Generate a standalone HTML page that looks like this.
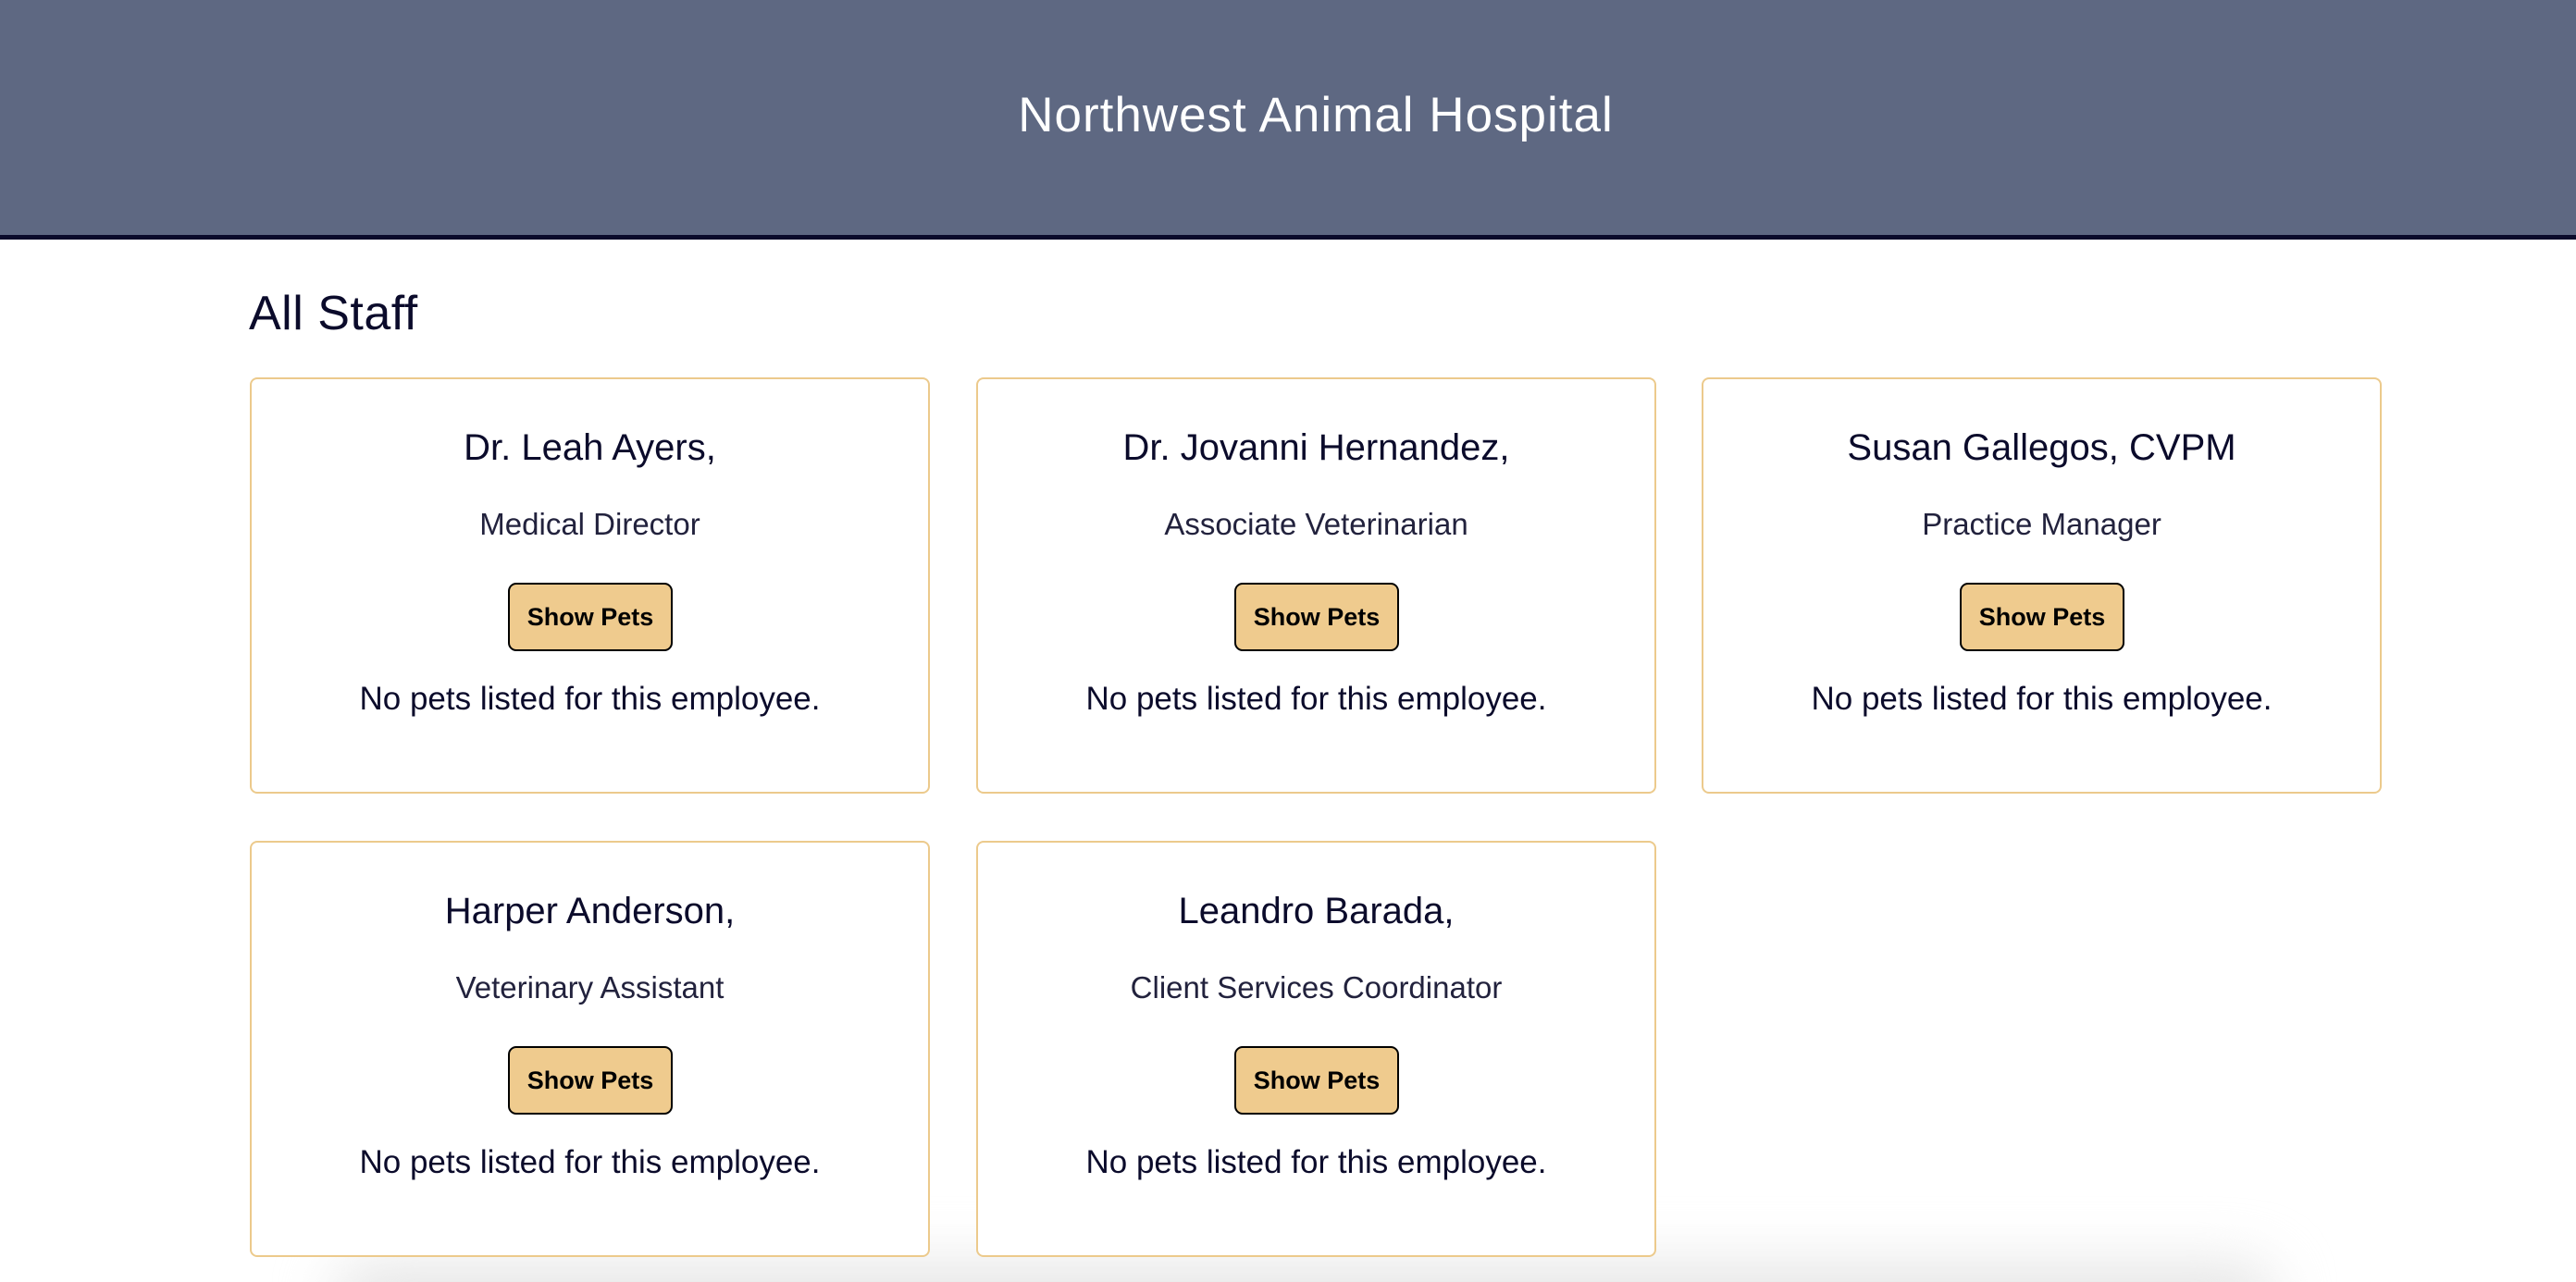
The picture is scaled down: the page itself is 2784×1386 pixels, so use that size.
<!DOCTYPE html>
<html><head><style>
html,body{margin:0;padding:0;width:2784px;height:1386px;overflow:hidden;background:#fff;font-family:"Liberation Sans",sans-serif;color:#0b0b2b;position:relative}
.hdr{position:absolute;left:0;top:0;width:2784px;height:254px;background:#5e6882;border-bottom:5px solid #0b0b2b}
.hdr h1{margin:0;position:absolute;left:60px;right:0;top:93px;text-align:center;font-weight:normal;font-size:53px;line-height:64px;color:#fff;letter-spacing:1px}
.title{position:absolute;left:269px;top:307px;font-size:52px;line-height:64px;margin:0;font-weight:normal;letter-spacing:0.5px}
.card{position:absolute;width:731px;height:446px;border:2px solid #ecca8c;border-radius:8px;background:#fff;text-align:center;z-index:2}
.card .n{position:absolute;left:0;right:0;top:50px;font-size:40px;line-height:48px}
.card .r{position:absolute;left:0;right:0;top:137px;font-size:33px;line-height:40px;font-weight:300;color:#22223d}
.card .b{position:absolute;left:277px;top:220px;width:178px;height:74px;box-sizing:border-box;background:#efcb8e;border:2px solid #000;border-radius:9px;font-weight:bold;font-size:27px;line-height:70px;color:#000}
.card .p{position:absolute;left:0;right:0;top:325px;font-size:35px;line-height:42px}
.sh{position:absolute;left:360px;top:1365px;width:2100px;height:80px;background:#e6e6e6;filter:blur(30px);border-radius:40px;z-index:1}
</style></head><body>
<div class="hdr"><h1>Northwest Animal Hospital</h1></div>
<h2 class="title">All Staff</h2>
<div class="card" style="left:270px;top:408px"><div class="n">Dr. Leah Ayers,</div><div class="r">Medical Director</div><div class="b">Show Pets</div><div class="p">No pets listed for this employee.</div></div>
<div class="card" style="left:1055px;top:408px"><div class="n">Dr. Jovanni Hernandez,</div><div class="r">Associate Veterinarian</div><div class="b">Show Pets</div><div class="p">No pets listed for this employee.</div></div>
<div class="card" style="left:1839px;top:408px"><div class="n">Susan Gallegos, CVPM</div><div class="r">Practice Manager</div><div class="b">Show Pets</div><div class="p">No pets listed for this employee.</div></div>
<div class="card" style="left:270px;top:909px"><div class="n">Harper Anderson,</div><div class="r">Veterinary Assistant</div><div class="b">Show Pets</div><div class="p">No pets listed for this employee.</div></div>
<div class="card" style="left:1055px;top:909px"><div class="n">Leandro Barada,</div><div class="r">Client Services Coordinator</div><div class="b">Show Pets</div><div class="p">No pets listed for this employee.</div></div>
<div class="sh"></div>
</body></html>
